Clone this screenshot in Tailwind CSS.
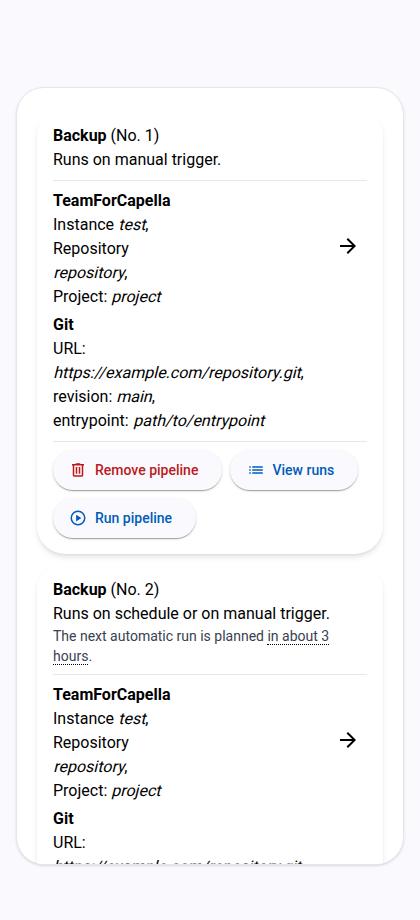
<!DOCTYPE html>
<html lang="en">
<head>
<meta charset="utf-8">
<title>Pipelines</title>
<script src="https://cdn.jsdelivr.net/npm/@tailwindcss/browser@4"></script>
</head>
<body class="bg-[#faf9fd] font-['Roboto',sans-serif] text-base text-black h-[920px] overflow-hidden pt-[87px] px-4">
<main class="h-[778px] w-[388px] overflow-hidden rounded-[28px] border border-[#e5e7eb] bg-white px-5 pt-5 shadow-[0_1px_3px_0_rgba(0,0,0,0.1),0_1px_2px_-1px_rgba(0,0,0,0.1)]">
  <section class="w-[346px] h-[446px] rounded-[28px] bg-white px-4 pt-4 shadow-[0_4px_6px_-1px_rgba(0,0,0,0.1),0_2px_4px_-2px_rgba(0,0,0,0.1)]">
    <div><b>Backup</b> (No. 1)</div>
    <div>Runs on manual trigger.</div>
    <hr class="mt-2 border-[#e5e7eb]">
    <div class="flex items-center">
      <div class="w-[252px] shrink-0">
        <div class="pt-2"><b>TeamForCapella</b><br>Instance <i class="inline-block not-italic -skew-x-[14deg] origin-[0_18px]">test</i>,<br>Repository<br><i class="inline-block not-italic -skew-x-[14deg] origin-[0_18px]">repository</i>,<br>Project: <i class="inline-block not-italic -skew-x-[14deg] origin-[0_18px]">project</i></div>
      </div>
      <svg class="ml-[30.5px] mt-0.5 size-6 shrink-0" viewBox="0 0 24 24"><path d="M16.175 13H4v-2h12.175l-5.600-5.600L12 4l8 8-8 8-1.425-1.400z"/></svg>
    </div>
    <div class="mt-1"><b>Git</b><br>URL:<br><i class="inline-block not-italic -skew-x-[14deg] origin-[0_18px]">https://example.com/repository.git</i>,<br>revision: <i class="inline-block not-italic -skew-x-[14deg] origin-[0_18px]">main</i>,<br>entrypoint: <i class="inline-block not-italic -skew-x-[14deg] origin-[0_18px]">path/to/entrypoint</i></div>
    <hr class="mt-2 border-[#e5e7eb]">
    <div class="mt-2 flex flex-wrap gap-2 text-sm font-medium text-[#005cbb]">
      <button class="flex h-10 w-[169px] items-center rounded-full bg-[#faf9fd] pl-4 text-[#ba1a1a] shadow-[0_2px_1px_-1px_rgba(0,0,0,0.2),0_1px_1px_0_rgba(0,0,0,0.14),0_1px_3px_0_rgba(0,0,0,0.12)]">
        <svg class="mr-2 size-[18px]" viewBox="0 0 24 24" fill="currentColor"><path d="M7 21q-.825 0-1.412-.587T5 19V6H4V4h5V3h6v1h5v2h-1v13q0 .825-.587 1.413T17 21zM17 6H7v13h10zM9 17h2V8H9zm4 0h2V8h-2z"/></svg>Remove pipeline
      </button>
      <button class="flex h-10 w-[128px] items-center rounded-full bg-[#faf9fd] pl-[16.5px] shadow-[0_2px_1px_-1px_rgba(0,0,0,0.2),0_1px_1px_0_rgba(0,0,0,0.14),0_1px_3px_0_rgba(0,0,0,0.12)]">
        <svg class="mr-2 size-[18px]" viewBox="0 0 24 24" fill="currentColor"><path d="M7 9V7h14v2zm0 4v-2h14v2zm0 4v-2h14v2zM3 7h2v2H3zm0 4h2v2H3zm0 4h2v2H3z"/></svg>View runs
      </button>
      <button class="flex h-10 w-[143px] items-center rounded-full bg-[#faf9fd] pl-4 shadow-[0_2px_1px_-1px_rgba(0,0,0,0.2),0_1px_1px_0_rgba(0,0,0,0.14),0_1px_3px_0_rgba(0,0,0,0.12)]">
        <svg class="mr-2 size-[18px]" viewBox="0 0 24 24" fill="currentColor"><path d="m9.500 16.500 7-4.500-7-4.500zM12 22a10 10 0 1 1 0-20 10 10 0 0 1 0 20zm0-2a8 8 0 1 0 0-16 8 8 0 0 0 0 16z"/></svg>Run pipeline
      </button>
    </div>
  </section>
  <section class="mt-2 w-[346px] h-[486px] rounded-[28px] bg-white px-4 pt-4 shadow-[0_4px_6px_-1px_rgba(0,0,0,0.1),0_2px_4px_-2px_rgba(0,0,0,0.1)]">
    <div><b>Backup</b> (No. 2)</div>
    <div>Runs on schedule or on manual trigger.</div>
    <div class="text-sm text-[#374151]">The next automatic run is planned <span class="border-b border-dotted border-black">in about 3 hours</span>.</div>
    <hr class="mt-2 border-[#e5e7eb]">
    <div class="flex items-center">
      <div class="w-[252px] shrink-0">
        <div class="pt-2"><b>TeamForCapella</b><br>Instance <i class="inline-block not-italic -skew-x-[14deg] origin-[0_18px]">test</i>,<br>Repository<br><i class="inline-block not-italic -skew-x-[14deg] origin-[0_18px]">repository</i>,<br>Project: <i class="inline-block not-italic -skew-x-[14deg] origin-[0_18px]">project</i></div>
      </div>
      <svg class="ml-[30.5px] mt-0.5 size-6 shrink-0" viewBox="0 0 24 24"><path d="M16.175 13H4v-2h12.175l-5.600-5.600L12 4l8 8-8 8-1.425-1.400z"/></svg>
    </div>
    <div class="mt-1"><b>Git</b><br>URL:<br><i class="inline-block not-italic -skew-x-[14deg] origin-[0_18px]">https://example.com/repository.git</i>,</div>
  </section>
</main>
</body>
</html>
